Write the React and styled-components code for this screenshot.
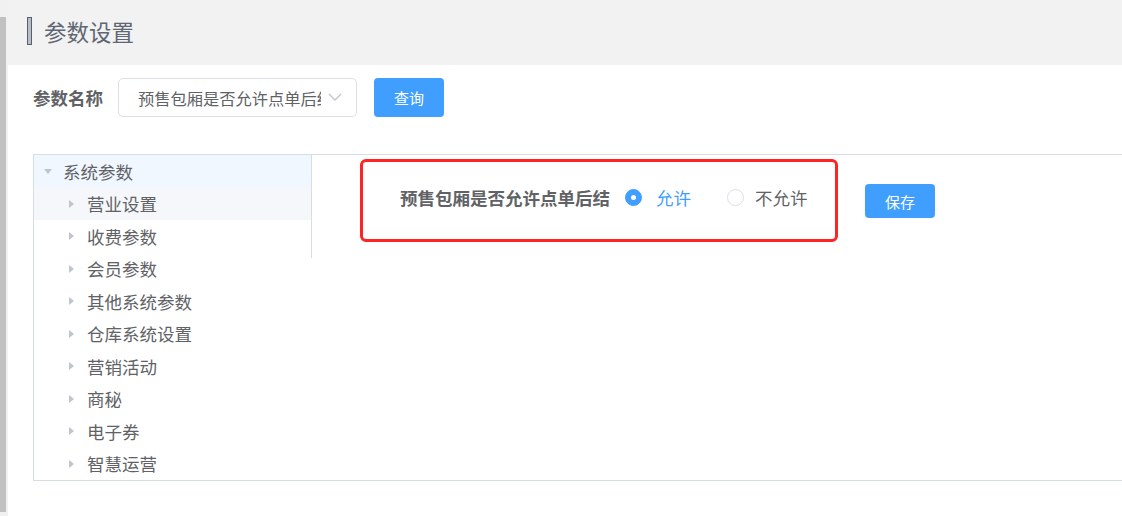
import React from 'react';
import styled, { createGlobalStyle } from 'styled-components';

const GlobalStyle = createGlobalStyle`
    html, body {
        margin: 0;
        padding: 0;
        background: #fff;
        font-family: "Noto Sans CJK SC", "Noto Sans", sans-serif;
    }
    * { box-sizing: border-box; }
`;

const Page = styled.div`
    display: flex;
    width: 1122px;
    height: 516px;
    overflow: hidden;
`;

const ScrollTrack = styled.div`
    width: 8px;
    display: flex;
    flex-direction: column;
    background: #f1f1f1;
    padding: 17px 2px 4px 0;
`;

const ScrollThumb = styled.div`
    flex: 1;
    background: #c1c1c1;
`;

const Main = styled.div`
    flex: 1;
    display: flex;
    flex-direction: column;
    min-width: 0;
`;

const Header = styled.div`
    height: 65px;
    background: #f2f2f2;
    display: flex;
    align-items: center;
    padding: 0 0 3px 19px;
`;

const TitleBar = styled.span`
    width: 5px;
    height: 28px;
    border: 1.5px solid #56606f;
    background: #b9bec6;
`;

const Title = styled.h1`
    margin: 0 0 0 12px;
    font-size: 22.5px;
    font-weight: 400;
    color: #5f6773;
    line-height: 1;
`;

const SearchRow = styled.div`
    display: flex;
    align-items: center;
    margin-top: 13px;
    padding-left: 25px;
`;

const FieldLabel = styled.label`
    font-size: 17.5px;
    font-weight: 700;
    color: #606266;
    margin-right: 15px;
    white-space: nowrap;
`;

const Select = styled.div`
    position: relative;
    flex-shrink: 0;
    width: 239px;
    height: 39px;
    border: 1px solid #dcdfe6;
    border-radius: 5px;
    display: flex;
    align-items: center;
    padding: 0 35px 0 19px;
    font-size: 16.25px;
    color: #606266;
`;

const SelectText = styled.span`
    white-space: nowrap;
    overflow: hidden;
`;

const Chevron = styled.svg`
    position: absolute;
    right: 14px;
    top: 50%;
    margin-top: -5px;
`;

const Button = styled.button`
    flex-shrink: 0;
    width: 70px;
    height: ${p => p.h || 39}px;
    margin-left: ${p => p.ml || 0}px;
    border: none;
    border-radius: 4px;
    background: #409eff;
    color: #fff;
    font-family: inherit;
    font-size: 15px;
    padding: 0;
    cursor: pointer;
`;

const Panel = styled.div`
    margin: 37px 0 0 25px;
    height: 327px;
    border: 1px solid #d8dde3;
    border-right: none;
    display: flex;
`;

const TreeColumn = styled.div`
    position: relative;
    flex-shrink: 0;
    width: 278px;

    &::after {
        content: '';
        position: absolute;
        right: 0;
        top: 0;
        width: 1px;
        height: 103px;
        background: #d8dde3;
    }
`;

const TreeRow = styled.div`
    height: 32.5px;
    display: flex;
    align-items: center;
    padding-left: ${p => p.indent}px;
    background: ${p => p.bg || 'transparent'};
    font-size: 17.5px;
    color: #606266;
    margin-right: 1px;
    white-space: nowrap;
`;

const Caret = styled.span`
    width: 0;
    height: 0;
    margin-right: ${p => p.gap}px;
    ${p => p.open ? `
        border-left: 4.5px solid transparent;
        border-right: 4.5px solid transparent;
        border-top: 5px solid #c0c4cc;
    ` : `
        border-top: 4.5px solid transparent;
        border-bottom: 4.5px solid transparent;
        border-left: 5px solid #c0c4cc;
    `}
`;

const Content = styled.div`
    flex: 1;
    padding: 4px 0 0 48px;
    display: flex;
    align-items: flex-start;
`;

const Highlight = styled.div`
    flex-shrink: 0;
    width: 478px;
    height: 83px;
    border: 3px solid #ff2323;
    border-radius: 6px;
    display: flex;
    align-items: center;
    padding: 0 0 6px 37px;
    white-space: nowrap;
`;

const ParamLabel = styled.span`
    font-size: 17.5px;
    font-weight: 700;
    color: #606266;
    margin-right: 15px;
`;

const Radio = styled.label`
    display: flex;
    align-items: center;
    font-size: 17.5px;
    color: ${p => p.checked ? '#409eff' : '#606266'};
    margin-right: 36px;
`;

const RadioDot = styled.span`
    flex-shrink: 0;
    width: 17px;
    height: 17px;
    border-radius: 50%;
    margin-right: ${p => p.checked ? 14 : 11}px;
    border: 1px solid ${p => p.checked ? '#409eff' : '#dcdfe6'};
    background: ${p => p.checked ? '#409eff' : '#fff'};
    display: flex;
    align-items: center;
    justify-content: center;

    &::after {
        content: '';
        width: 5px;
        height: 5px;
        border-radius: 50%;
        background: #fff;
    }
`;

const SaveWrap = styled.div`
    margin: 25px 0 0 27px;
`;

const children = ['营业设置', '收费参数', '会员参数', '其他系统参数', '仓库系统设置', '营销活动', '商秘', '电子券', '智慧运营'];

export default function App() {
    return (
        <Page>
            <GlobalStyle />
            <ScrollTrack><ScrollThumb /></ScrollTrack>
            <Main>
                <Header>
                    <TitleBar />
                    <Title>参数设置</Title>
                </Header>
                <SearchRow>
                    <FieldLabel>参数名称</FieldLabel>
                    <Select>
                        <SelectText>预售包厢是否允许点单后结</SelectText>
                        <Chevron width="14" height="9" viewBox="0 0 14 9">
                            <polyline points="1,1 7,7 13,1" fill="none" stroke="#c0c4cc" strokeWidth="1.3" />
                        </Chevron>
                    </Select>
                    <Button ml={17}>查询</Button>
                </SearchRow>
                <Panel>
                    <TreeColumn>
                        <TreeRow indent={10} bg="#f0f7ff">
                            <Caret open gap={11} />系统参数
                        </TreeRow>
                        {children.map((c, i) => (
                            <TreeRow key={c} indent={35} bg={i === 0 ? '#f5f7fa' : undefined}>
                                <Caret gap={13} />{c}
                            </TreeRow>
                        ))}
                    </TreeColumn>
                    <Content>
                        <Highlight>
                            <ParamLabel>预售包厢是否允许点单后结</ParamLabel>
                            <Radio checked>
                                <RadioDot checked />允许
                            </Radio>
                            <Radio>
                                <RadioDot />不允许
                            </Radio>
                        </Highlight>
                        <SaveWrap>
                            <Button h={34}>保存</Button>
                        </SaveWrap>
                    </Content>
                </Panel>
            </Main>
        </Page>
    );
}
